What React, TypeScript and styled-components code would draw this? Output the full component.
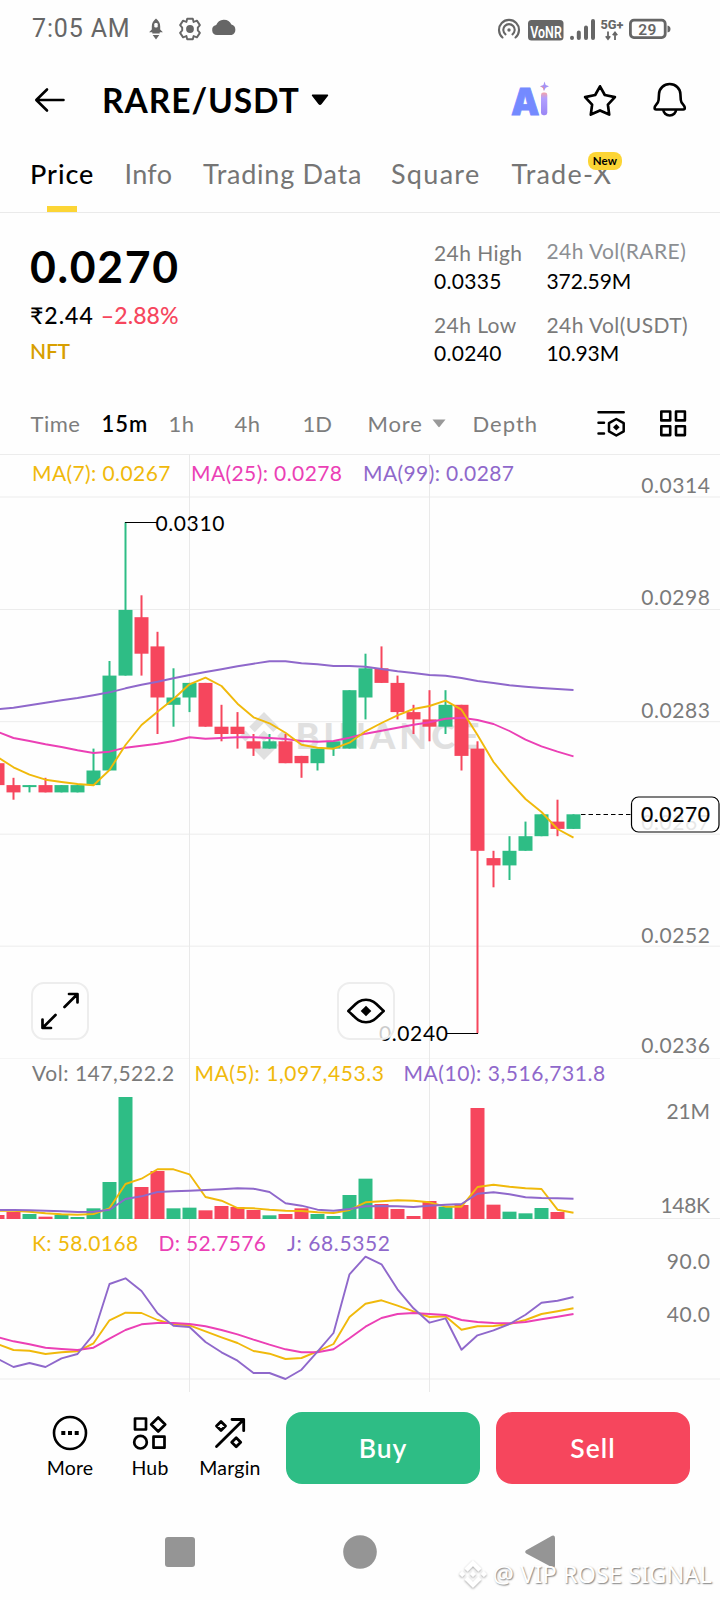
import React from "react";
import styled, { createGlobalStyle } from "styled-components";

const UP = "#2ebd85";
const DOWN = "#f6465d";
const GOLD = "#f0b90b";
const PINK = "#eb40b5";
const VIOLET = "#8f68cb";
const GREY = "#7a7a7a";
const GRID = "#ececec";

const GlobalStyle = createGlobalStyle`
  body {
    margin: 0;
    background: #fefefe;
    font-family: Lato, sans-serif;
    color: #000;
  }
`;

const Screen = styled.div`
  width: 720px;
  height: 1600px;
  overflow: hidden;
  display: flex;
  flex-direction: column;
`;

/* ---------- status bar ---------- */

const StatusBar = styled.header`
  height: 57px;
  box-sizing: border-box;
  padding: 0 49px 0 32px;
  display: flex;
  align-items: center;
  color: #666;
`;

const Clock = styled.span`
  width: 117px;
  font: 400 25px/30px Roboto, sans-serif;
  letter-spacing: 0.85px;
  white-space: nowrap;
`;

const StatusIcons = styled.svg<{ $end?: boolean }>`
  display: block;
  flex: none;
  margin-left: ${(p) => (p.$end ? "auto" : "0")};
`;

/* ---------- title bar ---------- */

const TitleBar = styled.div`
  height: 85px;
  box-sizing: border-box;
  padding: 0 32px 0 32px;
  display: flex;
  align-items: center;
`;

const Pair = styled.h1`
  margin: 0 11px 0 35px;
  font-size: 33.5px;
  line-height: 40px;
  font-weight: 700;
  letter-spacing: 0.95px;
`;

const TitleActions = styled.div`
  margin-left: auto;
  display: flex;
  align-items: center;
  gap: 32px;
`;

const Icon = styled.svg`
  display: block;
  flex: none;
  overflow: visible;
`;

/* ---------- tabs ---------- */

const Tabs = styled.nav`
  height: 70px;
  padding-left: 30px;
  border-bottom: 1px solid #eaeaea;
  display: grid;
  grid-template-columns: 94.5px 78.5px 188px 120.5px 120px;
`;

const Tab = styled.div<{ $active?: boolean; $track: number }>`
  position: relative;
  font-size: 27px;
  line-height: 63px;
  letter-spacing: ${(p) => p.$track}px;
  font-weight: ${(p) => (p.$active ? 500 : 400)};
  color: ${(p) => (p.$active ? "#000" : "#757575")};
  white-space: nowrap;

  &::after {
    content: "";
    display: ${(p) => (p.$active ? "block" : "none")};
    width: 30px;
    height: 6px;
    margin: 1px 0 0 17px;
    background: #fcd535;
  }
`;

const NewBadge = styled.span`
  position: absolute;
  left: 76.5px;
  top: 10px;
  width: 34px;
  height: 18px;
  border-radius: 8px;
  background: #fcd535;
  color: #000;
  font-size: 11.5px;
  line-height: 18px;
  font-weight: 700;
  letter-spacing: 0.2px;
  text-align: center;
`;

/* ---------- price summary ---------- */

const Summary = styled.section`
  height: 180px;
  box-sizing: border-box;
  padding: 26px 0 0 30px;
  display: grid;
  grid-template-columns: 404px 1fr;
`;

const LastPrice = styled.div`
  margin-top: 3px;
  font-size: 44.5px;
  line-height: 48px;
  font-weight: 700;
  letter-spacing: 1.7px;
`;

const FiatLine = styled.div`
  margin-top: 10px;
  display: flex;
  gap: 7px;
  font-size: 23px;
  line-height: 30px;
  font-weight: 500;
  letter-spacing: 1px;
`;

const Change = styled.span`
  color: ${DOWN};
  letter-spacing: 0.1px;
`;

const Tag = styled.div`
  margin-top: 8px;
  font-size: 21px;
  line-height: 26px;
  font-weight: 600;
  letter-spacing: -0.2px;
  color: #d89f00;
`;

const Stats = styled.dl`
  margin: 0;
  display: grid;
  grid-template-columns: 112.5px 1fr;
  grid-auto-rows: 56px;
  row-gap: 16px;
  font-size: 21px;
  line-height: 28px;
  white-space: nowrap;
`;

const StatLabel = styled.dt<{ $raised?: boolean }>`
  height: 28px;
  line-height: ${(p) => (p.$raised ? 24 : 28)}px;
  letter-spacing: 0.43px;
  color: ${(p) => (p.$raised ? "#8c8f93" : GREY)};
`;

const StatValue = styled.dd<{ $track: number }>`
  margin: 0;
  letter-spacing: ${(p) => p.$track}px;
`;

/* ---------- interval toolbar ---------- */

const Toolbar = styled.div`
  height: 61px;
  padding-left: 30.5px;
  display: grid;
  align-items: center;
  grid-template-columns: 71px 67px 66px 68px 65px 105px 124.5px 62px 1fr;
`;

const Interval = styled.span<{ $active?: boolean; $track?: number }>`
  display: flex;
  align-items: center;
  gap: 9px;
  font-size: 22px;
  line-height: 28px;
  letter-spacing: ${(p) => p.$track ?? 0.5}px;
  font-weight: ${(p) => (p.$active ? 600 : 400)};
  color: ${(p) => (p.$active ? "#000" : "#7d7d7d")};
`;

/* ---------- chart ---------- */

const Panel = styled.section<{ $height: number }>`
  position: relative;
  flex: none;
  height: ${(p) => p.$height}px;
`;

const Plot = styled.svg`
  display: block;
  font-family: Lato, sans-serif;
  font-size: 21px;
`;

const Legend = styled.div<{ $top: number; $columns: string }>`
  position: absolute;
  left: 32px;
  top: ${(p) => p.$top}px;
  display: grid;
  grid-template-columns: ${(p) => p.$columns};
  font-size: 21px;
  line-height: 26px;
  white-space: nowrap;
`;

const LegendItem = styled.span<{ $color: string; $track?: number }>`
  color: ${(p) => p.$color};
  letter-spacing: ${(p) => p.$track ?? 0.4}px;
`;

const ChartButton = styled.button<{ $left: number }>`
  position: absolute;
  left: ${(p) => p.$left}px;
  top: 528px;
  width: 58px;
  height: 58px;
  padding: 0;
  border: 2px solid #ededed;
  border-radius: 13px;
  background: rgba(254, 254, 254, 0.8);
  display: flex;
  align-items: center;
  justify-content: center;
`;

/* ---------- bottom bars ---------- */

const ActionBar = styled.footer`
  height: 112px;
  box-sizing: border-box;
  padding: 20px 30px 20px 30px;
  display: flex;
`;

const Shortcut = styled.div`
  width: 80px;
  display: flex;
  flex-direction: column;
  align-items: center;
  gap: 3px;
  padding-top: 2px;
  font-size: 19.5px;
  line-height: 26px;
  letter-spacing: 0.2px;
`;

const TradeButton = styled.button<{ $color: string }>`
  width: 194px;
  height: 72px;
  margin-left: 16px;
  padding: 0;
  border: 0;
  border-radius: 16px;
  background: ${(p) => p.$color};
  color: #fff;
  font: 600 26.5px/73px Lato, sans-serif;
  letter-spacing: 1px;
`;

const NavBar = styled.div`
  position: relative;
  height: 96px;
  box-sizing: border-box;
  padding: 0 165px;
  display: flex;
  align-items: center;
  justify-content: space-between;
`;

const Signature = styled.div`
  position: absolute;
  right: 8px;
  top: 55px;
  display: flex;
  align-items: center;
  gap: 6px;
  font: 400 23.5px/30px "Noto Sans", sans-serif;
  letter-spacing: 0.08px;
  color: #fff;
  text-shadow: 1px 1px 1.5px rgba(0, 0, 0, 0.5);
  white-space: nowrap;

  svg {
    filter: drop-shadow(0.5px 1px 0.8px rgba(0, 0, 0, 0.35));
  }
`;

/* ---------- data ---------- */

// open, close, high, low in price ticks of 0.0001
type Candle = [number, number, number, number];

const candles: Candle[] = [
  [277, 274, 277, 274], [274, 273, 275, 272], [274, 274, 274, 273], [274, 273, 275, 273],
  [273, 274, 274, 273], [273, 274, 274, 273], [274, 276, 279, 274], [276, 289, 291, 276],
  [289, 298, 310, 289], [297, 292, 300, 289], [293, 286, 295, 281], [285, 286, 290, 282],
  [286, 288, 288, 284], [288, 282, 288, 282], [282, 281, 285, 280], [282, 281, 284, 279],
  [280, 279, 281, 278], [279, 280, 281, 279], [280, 277, 281, 277], [278, 277, 278, 275],
  [277, 279, 279, 276], [279, 280, 280, 278], [279, 287, 287, 279], [286, 290, 292, 283],
  [290, 288, 293, 288], [288, 284, 289, 283], [284, 283, 285, 281], [283, 282, 287, 280],
  [282, 285, 287, 281], [285, 278, 285, 276], [279, 265, 280, 240], [264, 263, 265, 260],
  [263, 265, 267, 261], [265, 267, 269, 265], [267, 270, 270, 267], [269, 268, 272, 267],
  [268, 270, 270, 268],
];

// Series below are in thirds of a pixel, one value for each candle.
const ma7 = [831, 862, 884, 899, 906, 912, 916, 870, 795, 735, 695, 657, 613, 593, 618, 671, 712, 730, 758, 794, 803, 806, 788, 754, 729, 706, 687, 678, 662, 689, 765, 846, 905, 957, 996, 1047, 1073];
const ma25 = [755, 774, 783, 793, 801, 811, 819, 815, 803, 797, 791, 783, 772, 776, 774, 772, 772, 774, 777, 783, 785, 783, 773, 761, 752, 743, 734, 727, 716, 713, 720, 732, 753, 779, 799, 815, 829];
const ma99 = [688, 683, 676, 668, 661, 654, 646, 637, 625, 614, 605, 595, 585, 576, 568, 559, 551, 544, 544, 550, 553, 558, 558, 560, 567, 574, 579, 585, 587, 594, 603, 609, 616, 620, 624, 627, 630];

const volumes = [12, 22, 15, 7, 12, 6, 32, 111, 366, 96, 144, 32, 34, 26, 39, 36, 27, 11, 15, 32, 15, 9, 72, 121, 45, 30, 9, 54, 37, 42, 333, 43, 22, 17, 33, 21, 0];
const volMa5 = [752, 752, 755, 760, 763, 764, 762, 745, 672, 656, 628, 628, 643, 711, 722, 744, 745, 749, 752, 753, 757, 759, 750, 727, 724, 721, 722, 727, 740, 740, 681, 674, 680, 685, 687, 749, 758];
const volMa10 = [750, 750, 751, 752, 754, 756, 755, 749, 717, 709, 696, 694, 692, 690, 688, 685, 686, 696, 730, 737, 749, 752, 747, 739, 738, 739, 741, 737, 734, 732, 701, 697, 703, 712, 714, 715, 716];

const kLine = [372, 390, 392, 402, 397, 394, 370, 301, 278, 279, 300, 313, 316, 334, 352, 369, 393, 401, 417, 414, 394, 372, 291, 251, 241, 257, 274, 291, 289, 329, 319, 318, 312, 300, 282, 274, 265];
const dLine = [351, 364, 373, 383, 387, 390, 383, 356, 330, 313, 309, 309, 312, 319, 330, 343, 359, 374, 388, 397, 397, 388, 355, 320, 294, 282, 279, 282, 285, 300, 306, 309, 310, 306, 298, 290, 282];
const jLine = [416, 441, 429, 441, 415, 402, 343, 192, 175, 213, 280, 317, 321, 366, 397, 422, 459, 459, 477, 449, 395, 339, 163, 110, 133, 208, 265, 308, 295, 389, 346, 331, 312, 284, 248, 242, 231];

const centre = (i: number) => 16 * i - 2.5;
const priceY = (ticks: number) => 360.3 + (270 - ticks) * 7.3;

function Line({ values, color, offset }: { values: number[]; color: string; offset: number }) {
  const points = values.map((v, i) => `${centre(i)},${(v / 3 + offset).toFixed(1)}`).join(" ");
  return <polyline points={points} fill="none" stroke={color} strokeWidth={1.9} strokeLinejoin="round" />;
}

function Verticals({ height }: { height: number }) {
  return <path d={`M189.5 0V${height}M429.5 0V${height}`} stroke="#e9e9e9" />;
}

function AxisLabel({ y, track = 0.6, children }: { y: number; track?: number; children: string }) {
  return (
    <text x={710 + track} y={y} textAnchor="end" fill={GREY} letterSpacing={track}>
      {children}
    </text>
  );
}

const LOGO =
  "M16.624 13.9202l2.7175 2.7154-7.353 7.353-7.353-7.352 2.7175-2.7164 4.6355 4.6595 4.6356-4.6595zm4.6366-4.6366L24 12l-2.7154 2.7164L18.5682 12l2.6924-2.7164zm-9.272.001l2.7163 2.6914-2.7164 2.7174v-.001L9.2721 12l2.7164-2.7154zm-9.2722-.001L5.4088 12l-2.6914 2.6924L0 12l2.7164-2.7164zM11.9885.0115l7.353 7.329-2.7174 2.7154-4.6356-4.6356-4.6355 4.6595-2.7174-2.7154 7.353-7.353z";

function PricePanel() {
  return (
    <Panel $height={605}>
      <Plot width={720} height={605} viewBox="0 0 720 605">
        <path d="M0 .5H720M0 43H720M0 155.5H720M0 267.7H720M0 380.2H720M0 492.2H720M0 605H720" stroke={GRID} />
        <Verticals height={605} />
        <g fill="#e0e0e0">
          <path transform="translate(240 258) scale(2)" d={LOGO} />
          <text x={295.5} y={295} fontSize={36} fontWeight={900} textLength={184}>
            BINANCE
          </text>
        </g>
        {candles.map(([open, close, high, low], i) => {
          const top = priceY(Math.max(open, close));
          return (
            <g key={i} fill={open > close ? DOWN : UP}>
              <rect x={centre(i) - 1} y={priceY(high)} width={2} height={(high - low) * 7.3} />
              <rect x={centre(i) - 7} y={top} width={14} height={Math.max(2, Math.abs(open - close) * 7.3)} />
            </g>
          );
        })}
        <Line values={ma99} color={VIOLET} offset={26} />
        <Line values={ma25} color={PINK} offset={26} />
        <Line values={ma7} color={GOLD} offset={26} />
        <path d="M125 68.5H157M447 579.5H478" stroke="#000" strokeWidth={1.2} />
        <text x={155.500} y={77.200} letterSpacing={0.6}>0.0310</text>
        <text x={379} y={586.700} letterSpacing={0.6}>0.0240</text>
        <AxisLabel y={39}>0.0314</AxisLabel>
        <AxisLabel y={151}>0.0298</AxisLabel>
        <AxisLabel y={264}>0.0283</AxisLabel>
        <AxisLabel y={376}>0.0267</AxisLabel>
        <AxisLabel y={489}>0.0252</AxisLabel>
        <AxisLabel y={599}>0.0236</AxisLabel>
        <path d="M581 360.5H632" stroke="#000" strokeWidth={1.2} strokeDasharray="4.5 3" />
        <rect x={631.5} y={343} width={87.5} height={35} rx={7} fill="#fff" fillOpacity={0.82} stroke="#000" strokeWidth={1.2} />
        <text x={710.5} y={368} textAnchor="end" letterSpacing={0.6} stroke="#000" strokeWidth={0.2}>0.0270</text>
      </Plot>
      <Legend $top={6} $columns="159px 172px auto">
        <LegendItem $color={GOLD}>MA(7): 0.0267</LegendItem>
        <LegendItem $color={PINK}>MA(25): 0.0278</LegendItem>
        <LegendItem $color={VIOLET}>MA(99): 0.0287</LegendItem>
      </Legend>
      <ChartButton $left={31} aria-label="Full screen">
        <Icon width={40} height={40} viewBox="-20 -20 40 40" fill="none" stroke="#000" strokeWidth={2.7} strokeLinecap="round" strokeLinejoin="round">
          <path d="M4.5 -4L17 -16.5M9 -17H17.5V-8.5M-4.5 4L-17 16.5M-17.5 8.5V17H-9" />
        </Icon>
      </ChartButton>
      <ChartButton $left={337} aria-label="Show orders">
        <Icon width={40} height={28} viewBox="-20 -14 40 28">
          <path d="M-17.7 0C-11 -6 -8 -11.2 0 -11.2S11 -6 17.7 0C11 6 8 11.2 0 11.2S-11 6 -17.7 0Z" fill="none" stroke="#000" strokeWidth={2.6} strokeLinejoin="round" />
          <path d="M0 -5.3L5.3 0L0 5.3L-5.3 0Z" />
        </Icon>
      </ChartButton>
    </Panel>
  );
}

function VolumePanel() {
  return (
    <Panel $height={160}>
      <Plot width={720} height={160} viewBox="0 0 720 160">
        <path d="M0 159.5H720" stroke={GRID} />
        <Verticals height={160} />
        {volumes.map((v, i) => (
          <rect key={i} x={centre(i) - 7} y={160 - v / 3} width={14} height={v / 3} fill={candles[i][0] > candles[i][1] ? DOWN : UP} />
        ))}
        <Line values={volMa5} color={GOLD} offset={-99} />
        <Line values={volMa10} color={VIOLET} offset={-99} />
        <AxisLabel y={59.7} track={-0.2}>21M</AxisLabel>
        <AxisLabel y={154} track={-0.3}>148K</AxisLabel>
      </Plot>
      <Legend $top={1} $columns="162.500px 209px auto">
        <LegendItem $color={GREY} $track={0.55}>Vol: 147,522.2</LegendItem>
        <LegendItem $color={GOLD} $track={0.57}>MA(5): 1,097,453.3</LegendItem>
        <LegendItem $color={VIOLET} $track={0.55}>MA(10): 3,516,731.8</LegendItem>
      </Legend>
    </Panel>
  );
}

function KdjPanel() {
  return (
    <Panel $height={173}>
      <Plot width={720} height={173} viewBox="0 0 720 173">
        <path d="M0 160H720" stroke={GRID} />
        <Verticals height={173} />
        <Line values={kLine} color={GOLD} offset={1} />
        <Line values={dLine} color={PINK} offset={1} />
        <Line values={jLine} color={VIOLET} offset={1} />
        <AxisLabel y={50}>90.0</AxisLabel>
        <AxisLabel y={103}>40.0</AxisLabel>
      </Plot>
      <Legend $top={11} $columns="126.500px 128.500px auto">
        <LegendItem $color={GOLD}>K: 58.0168</LegendItem>
        <LegendItem $color={PINK} $track={0.3}>D: 52.7576</LegendItem>
        <LegendItem $color={VIOLET} $track={0.6}>J: 68.5352</LegendItem>
      </Legend>
    </Panel>
  );
}

export default function App() {
  return (
    <Screen>
      <GlobalStyle />
      <StatusBar>
        <Clock>7:05 AM</Clock>
        <StatusIcons width={90} height={26} viewBox="149 15 90 26" fill="#666">
          <path d="M156 17.5c2.6 2 4.2 4.700 4.200 7.800v3.200l2.700 2.700h-3.200v1.300h-7.400v-1.300h-3.200l2.700-2.700v-3.200c0-3.100 1.600-5.800 4.200-7.800zM152.700 34h6.600L156 38.500z" />
          <rect x={154.3} y={22} width={3.4} height={4.5} rx={1.2} fill="#fefefe" />
          <g transform="translate(190 28)">
            <path d="M-2.800 -10.200H2.800L3.600 -7L6.900 -8.400L9.900 -3.900L7.800 -1.400V1.400L9.900 3.900L6.900 8.400L3.600 7L2.800 10.200H-2.800L-3.600 7L-6.900 8.400L-9.900 3.900L-7.800 1.400V-1.400L-9.900 -3.900L-6.900 -8.400L-3.600 -7Z" fill="none" stroke="#666" strokeWidth={1.9} strokeLinejoin="round" />
            <circle r={3.9} />
          </g>
          <path d="M217 34a5 5 0 0 1-.8-9.900a8.200 8.200 0 0 1 15.200-.6a5.500 5.500 0 0 1 .2 10.500z" />
        </StatusIcons>
        <StatusIcons $end width={174} height={26} viewBox="497 15 174 26" fill="#666">
          <g fill="none" stroke="#666" strokeWidth={2.100} strokeLinecap="round" transform="translate(509 29)">
            <path d="M-6.500 7.500A10 10 0 1 1 6.500 7.500M-3.500 4.300A5.700 5.700 0 1 1 3.500 4.300" />
            <circle r={1.700} fill="#666" stroke="none" />
          </g>
          <rect x={528} y={19} width={35.5} height={20.5} rx={3.5} />
          <text x={530.3} y={36.5} fill="#fff" fontFamily="Roboto" fontWeight={600} fontSize={17} textLength={31.500} lengthAdjust="spacingAndGlyphs">VoNR</text>
          <path d="M572 37V36.800M578.800 37V31.500M586 37V26.500M593 37V20" stroke="#666" strokeWidth={4} strokeLinecap="round" />
          <text x={600.5} y={28} fontFamily="Roboto" fontWeight={800} fontSize={13.5} textLength={23} lengthAdjust="spacingAndGlyphs">5G+</text>
          <path d="M608 30.500V37.500M605.800 35.300L608 38L610.200 35.300M615 39V32M612.800 34.200L615 31.500L617.200 34.200" fill="none" stroke="#666" strokeWidth={1.800} />
          <rect x={630.4} y={19.2} width={34.8} height={17.4} rx={3.5} fill="none" stroke="#666" strokeWidth={2.8} />
          <path d="M667.500 24.500Q670.500 25 670.500 28T667.500 31.500Z" />
          <text x={638.3} y={33.8} fontFamily="Roboto" fontWeight={600} fontSize={15.5} textLength={18}>29</text>
        </StatusIcons>
      </StatusBar>

      <TitleBar>
        <Icon width={35} height={28} viewBox="32 86 35 28" fill="none" stroke="#000" strokeWidth={2.6} strokeLinecap="round" strokeLinejoin="round">
          <path d="M63.500 100H36.500M47 89.500L36.300 100L47 110.500" />
        </Icon>
        <Pair>RARE/USDT</Pair>
        <Icon width={18} height={12} viewBox="0 0 18 12">
          <path d="M1.500 1.200H16.500L9.900 9.800Q9 10.800 8.100 9.800Z" stroke="#000" strokeWidth={1.4} strokeLinejoin="round" />
        </Icon>
        <TitleActions>
          <Icon width={38} height={36} viewBox="511 82 38 36">
            <defs>
              <linearGradient id="stem" x1="0" y1="0" x2="0" y2="1">
                <stop offset="0" stopColor="#f5a3a8" />
                <stop offset=".25" stopColor="#b3a0ff" />
                <stop offset="1" stopColor="#9a86f5" />
              </linearGradient>
            </defs>
            <text x={511} y={115} fontFamily="Inter" fontWeight={900} fontSize={37} fill="#748aff" stroke="#748aff" strokeWidth={0.8} textLength={28.5} lengthAdjust="spacingAndGlyphs">A</text>
            <rect x={541} y={92.5} width={6.3} height={22.7} rx={2.4} fill="url(#stem)" />
            <path d="M544.500 81.500L545.700 85L549 86.300L545.700 87.800L544 91L543 87.800L540 86.300L543.400 85Z" fill="#a493f6" />
            <path d="M540 86.300L543 87.800L544 91L543.800 87Z" fill="#f58a8a" />
          </Icon>
          <Icon width={38} height={36} viewBox="581 82 38 36" fill="none" stroke="#000" strokeWidth={2.7} strokeLinejoin="round">
            <path d="M600 86.300L604.800 95L614.900 97.100L607.900 104.600L609.200 114.600L600 110.400L590.800 114.600L592.100 104.600L585.100 97.100L595.200 95Z" />
          </Icon>
          <Icon width={37} height={36} viewBox="651 82 37 36" fill="none" stroke="#000" strokeWidth={2.6} strokeLinejoin="round">
            <path d="M669.700 84c-6 0-10.500 4.500-10.700 10l-.4 6c-.3 4-4 4.800-4 8q0 1.500 1.500 1.500h27.200q1.500 0 1.500-1.500c0-3.200-3.700-4-4-8l-.4-6c-.2-5.500-4.700-10-10.700-10z" />
            <path d="M663.300 109.500a6.400 6 0 0 0 12.800 0" />
          </Icon>
        </TitleActions>
      </TitleBar>

      <Tabs>
        <Tab $active $track={0.95}>Price</Tab>
        <Tab $track={0.3}>Info</Tab>
        <Tab $track={0.75}>Trading Data</Tab>
        <Tab $track={1.3}>Square</Tab>
        <Tab $track={1.2}>
          Trade-X
          <NewBadge>New</NewBadge>
        </Tab>
      </Tabs>

      <Summary>
        <div>
          <LastPrice>0.0270</LastPrice>
          <FiatLine>
            <span>₹2.44</span>
            <Change>–2.88%</Change>
          </FiatLine>
          <Tag>NFT</Tag>
        </div>
        <Stats>
          <div>
            <StatLabel>24h High</StatLabel>
            <StatValue $track={0.3}>0.0335</StatValue>
          </div>
          <div>
            <StatLabel $raised>24h Vol(RARE)</StatLabel>
            <StatValue $track={-0.1}>372.59M</StatValue>
          </div>
          <div>
            <StatLabel>24h Low</StatLabel>
            <StatValue $track={0.3}>0.0240</StatValue>
          </div>
          <div>
            <StatLabel>24h Vol(USDT)</StatLabel>
            <StatValue $track={-0.1}>10.93M</StatValue>
          </div>
        </Stats>
      </Summary>

      <Toolbar>
        <Interval>Time</Interval>
        <Interval $active $track={1}>15m</Interval>
        <Interval>1h</Interval>
        <Interval>4h</Interval>
        <Interval $track={0}>1D</Interval>
        <Interval $track={0.9}>
          More
          <Icon width={14} height={9} viewBox="0 0 14 9" fill="#999">
            <path d="M0.500 0.500H13.500L7.700 7.800Q7 8.600 6.300 7.800Z" />
          </Icon>
        </Interval>
        <Interval $track={1}>Depth</Interval>
        <Icon width={29} height={28} viewBox="598 410 29 28" fill="none" stroke="#000" strokeWidth={2.5} strokeLinecap="round" strokeLinejoin="round">
          <path d="M599.500 412.200H624.700M599.500 422.800H605M599.500 433.600H605" />
          <path d="M617.300 419L624.700 423.100V431.300L617.300 435.500L610 431.300V423.100Z" />
          <path d="M617.300 424L620.600 427.300L617.300 430.600L614 427.300Z" fill="#000" stroke="none" />
        </Icon>
        <Icon width={28} height={28} viewBox="660 410 28 28" fill="none" stroke="#000" strokeWidth={2.6} strokeLinejoin="round">
          <path d="M662.300 411.500h8.900v8.900h-8.900zM677 411.500h8.900v8.900H677zM662.300 426.200h8.900v8.900h-8.900zM677 426.200h8.900v8.900H677z" />
        </Icon>
      </Toolbar>

      <PricePanel />
      <VolumePanel />
      <KdjPanel />

      <ActionBar>
        <Shortcut>
          <Icon width={38} height={38} viewBox="51 1414 38 38">
            <circle cx={70} cy={1433} r={16} fill="none" stroke="#000" strokeWidth={2.6} />
            <path d="M61.300 1431h4v4h-4zM68 1431h4v4h-4zM74.700 1431h4v4h-4z" />
          </Icon>
          More
        </Shortcut>
        <Shortcut>
          <Icon width={38} height={38} viewBox="131.500 1414 38 38" fill="none" stroke="#000" strokeWidth={2.7} strokeLinejoin="round">
            <path d="M135.500 1418.500h11v11h-11zM154 1436.700h11v11h-11zM158.700 1417.500l7 7l-7 7l-7-7z" />
            <circle cx={141} cy={1442.2} r={6.3} />
          </Icon>
          Hub
        </Shortcut>
        <Shortcut>
          <Icon width={38} height={38} viewBox="211.500 1414 38 38" fill="none" stroke="#000" strokeWidth={2.8} strokeLinecap="round" strokeLinejoin="round">
            <path d="M217 1446.500L244 1419.700M232.500 1419.500H244.200V1430.700M221.500 1421.500l4.500 4.500l-4.500 4.500l-4.500-4.500zM236.700 1437.800l4.500 4.500l-4.500 4.500l-4.500-4.500z" />
          </Icon>
          Margin
        </Shortcut>
        <TradeButton $color={UP}>Buy</TradeButton>
        <TradeButton $color={DOWN}>Sell</TradeButton>
      </ActionBar>

      <NavBar>
        <Icon width={30} height={30} viewBox="0 0 30 30" fill="#959595">
          <rect width={30} height={30} rx={3} />
        </Icon>
        <Icon width={34} height={34} viewBox="0 0 34 34" fill="#959595">
          <circle cx={17} cy={17} r={16.8} />
        </Icon>
        <Icon width={30} height={34} viewBox="0 0 30 34" fill="#959595">
          <path d="M27 .8Q30 -.5 30 3V30.500Q30 34 27 32.300L1.200 18.600Q-.8 17 1.200 15.300Z" />
        </Icon>
        <Signature>
          <svg width={28} height={28} viewBox="0 0 24 24" fill="#fff">
            <path d={LOGO} />
          </svg>
          @ VIP ROSE SIGNAL
        </Signature>
      </NavBar>
    </Screen>
  );
}
